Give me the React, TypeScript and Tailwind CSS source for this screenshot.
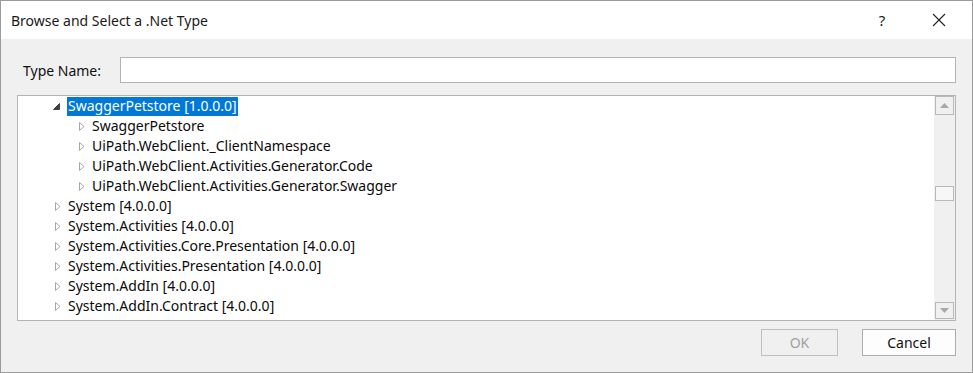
import React from "react";

const font = { fontFamily: '"Noto Sans", "Segoe UI", sans-serif' };

function Collapsed() {
  return (
    <svg width="6" height="9" viewBox="0 0 6 9" className="shrink-0">
      <path d="M0.5 0.5 L5 4.5 L0.5 8.5 Z" fill="white" stroke="#a6a6a6" strokeWidth="1" />
    </svg>
  );
}

function Expanded() {
  return (
    <svg width="7" height="7" viewBox="0 0 7 7" className="shrink-0">
      <path d="M6.5 0.5 L6.5 6.5 L0.5 6.5 Z" fill="#404040" stroke="#404040" strokeWidth="1" strokeLinejoin="miter" />
    </svg>
  );
}

type Row = { level: number; text: string; expanded?: boolean; selected?: boolean };

const rows: Row[] = [
  { level: 1, text: "SwaggerPetstore [1.0.0.0]", expanded: true, selected: true },
  { level: 2, text: "SwaggerPetstore" },
  { level: 2, text: "UiPath.WebClient._ClientNamespace" },
  { level: 2, text: "UiPath.WebClient.Activities.Generator.Code" },
  { level: 2, text: "UiPath.WebClient.Activities.Generator.Swagger" },
  { level: 1, text: "System [4.0.0.0]" },
  { level: 1, text: "System.Activities [4.0.0.0]" },
  { level: 1, text: "System.Activities.Core.Presentation [4.0.0.0]" },
  { level: 1, text: "System.Activities.Presentation [4.0.0.0]" },
  { level: 1, text: "System.AddIn [4.0.0.0]" },
  { level: 1, text: "System.AddIn.Contract [4.0.0.0]" },
];

export default function App() {
  return (
    <div
      className="w-[973px] h-[373px] border border-[#9b9b9b] bg-[#f0f0f0] flex flex-col text-[#000] overflow-hidden"
      style={font}
    >
      {/* Title bar */}
      <div className="h-[38px] bg-white flex items-center shrink-0">
        <div className="pl-[10px] text-[14px] text-[#1a1a1a] flex-1">Browse and Select a .Net Type</div>
        <div className="w-[20px] text-center text-[15px] text-[#222] mr-[37px]">?</div>
        <div className="w-[20px] flex justify-center mr-[23px]">
          <svg width="14" height="14" viewBox="0 0 14 14">
            <path d="M1 1 L13 13 M13 1 L1 13" stroke="#222" strokeWidth="1.1" />
          </svg>
        </div>
      </div>

      {/* Body */}
      <div className="flex-1 flex flex-col pl-[16px] pt-[18px]">
        <div className="flex items-center h-[26px]">
          <div className="w-[103px] pl-[6px] text-[14px] text-[#111]">Type Name:</div>
          <div className="w-[836px] h-[26px] bg-white border border-[#b4b4b4]" />
        </div>

        <div className="mt-[12px] w-[939px] h-[226px] bg-white border border-[#b4b4b4] flex">
          <div className="flex-1 flex flex-col">
            {rows.map((r, i) => (
              <div key={i} className="h-[20px] flex items-center shrink-0">
                {r.level === 1 ? (
                  <div className="w-[49px] flex justify-end pr-[6px] shrink-0">
                    {r.expanded ? (
                      <div className="-translate-x-[1px]"><Expanded /></div>
                    ) : (
                      <Collapsed />
                    )}
                  </div>
                ) : (
                  <div className="w-[73px] flex justify-end pr-[6px] shrink-0">
                    <Collapsed />
                  </div>
                )}
                <div
                  className={
                    r.selected
                      ? "bg-[#0078d7] text-white px-[1px] h-[19px] flex items-center text-[14px] leading-none"
                      : "px-[1px] text-[14px] text-[#0a0a0a] leading-none"
                  }
                >
                  {r.text}
                </div>
              </div>
            ))}
          </div>
          {/* Scrollbar */}
          <div className="w-[21px] bg-[#f0f0f0] flex flex-col items-center pt-[0px] pb-[1px]">
            <div className="w-[19px] h-[19px] border border-[#b9b9b9] bg-[#f0f0f0] flex items-center justify-center">
              <svg width="9" height="5" viewBox="0 0 9 5">
                <path d="M0 5 L4.5 0 L9 5 Z" fill="#a8a8a8" />
              </svg>
            </div>
            <div className="mt-[71px] w-[19px] h-[15px] border border-[#b9b9b9] bg-[#f7f7f7]" />
            <div className="flex-1" />
            <div className="w-[19px] h-[17px] border border-[#b9b9b9] bg-[#f0f0f0] flex items-center justify-center">
              <svg width="9" height="5" viewBox="0 0 9 5">
                <path d="M0 0 L4.5 5 L9 0 Z" fill="#a8a8a8" />
              </svg>
            </div>
          </div>
        </div>

        <div className="mt-[8px] w-[939px] flex justify-end gap-[24px]">
          <div className="w-[77px] h-[27px] border border-[#bfbfbf] bg-[#f0f0f0] flex items-center justify-center text-[14px] text-[#a0a0a0]">
            OK
          </div>
          <div className="w-[94px] h-[27px] border border-[#adadad] bg-[#fdfdfd] flex items-center justify-center text-[14px] text-[#111]">
            Cancel
          </div>
        </div>
      </div>
    </div>
  );
}
